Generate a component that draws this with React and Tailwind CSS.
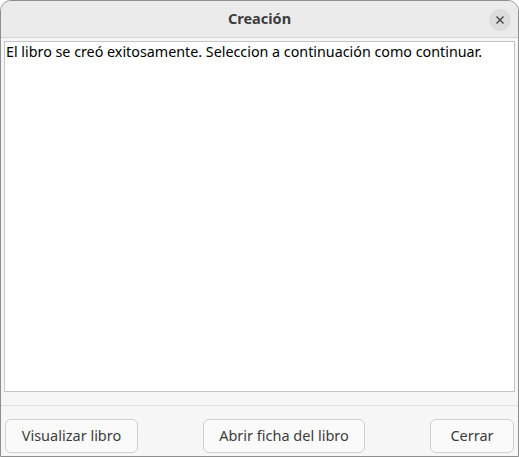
export default function App() {
  const font = { fontFamily: '"Noto Sans", "Open Sans", sans-serif' };
  return (
    <div className="w-[519px] h-[457px] bg-white" style={font}>
      <div className="flex flex-col h-full border border-[#8e8e8e] rounded-t-[11px] overflow-hidden bg-[#f6f6f6]">
        <div className="relative flex items-center justify-center h-[37px] shrink-0 bg-[#ebebeb] border-b border-[#d4d4d4]">
          <span className="text-[14.5px] font-bold text-[#3d3d3d]">Creación</span>
          <button className="absolute right-[7px] top-[8px] w-[22px] h-[22px] rounded-full bg-[#dcdcdc] flex items-center justify-center">
            <svg width="8" height="8" viewBox="0 0 8 8">
              <path d="M0.5 0.5 L7.5 7.5 M7.5 0.5 L0.5 7.5" stroke="#3d3d3d" strokeWidth="1.3" />
            </svg>
          </button>
        </div>
        <div className="flex-1 flex flex-col px-[3px] pt-[3px]">
          <div className="h-[351px] bg-white border border-[#c4c4c4] px-[1px]">
            <p className="text-[14.3px] leading-[20px] text-black">
              El libro se creó exitosamente. Seleccion a continuación como continuar.
            </p>
          </div>
        </div>
        <div className="h-[13px] shrink-0" />
        <div className="border-t border-[#e0e0e0] flex items-center justify-between px-[4px] pt-[13px] pb-[3px] shrink-0">
          <button className="w-[133px] h-[34px] rounded-[6px] border border-[#cfcfcf] bg-[#fafafa] text-[14.5px] text-[#3d3d3d]">Visualizar libro</button>
          <button className="w-[162px] h-[34px] rounded-[6px] border border-[#cfcfcf] bg-[#fafafa] text-[14.5px] text-[#3d3d3d]">Abrir ficha del libro</button>
          <button className="w-[84px] h-[34px] rounded-[6px] border border-[#cfcfcf] bg-[#fafafa] text-[14.5px] text-[#3d3d3d]">Cerrar</button>
        </div>
      </div>
    </div>
  );
}
